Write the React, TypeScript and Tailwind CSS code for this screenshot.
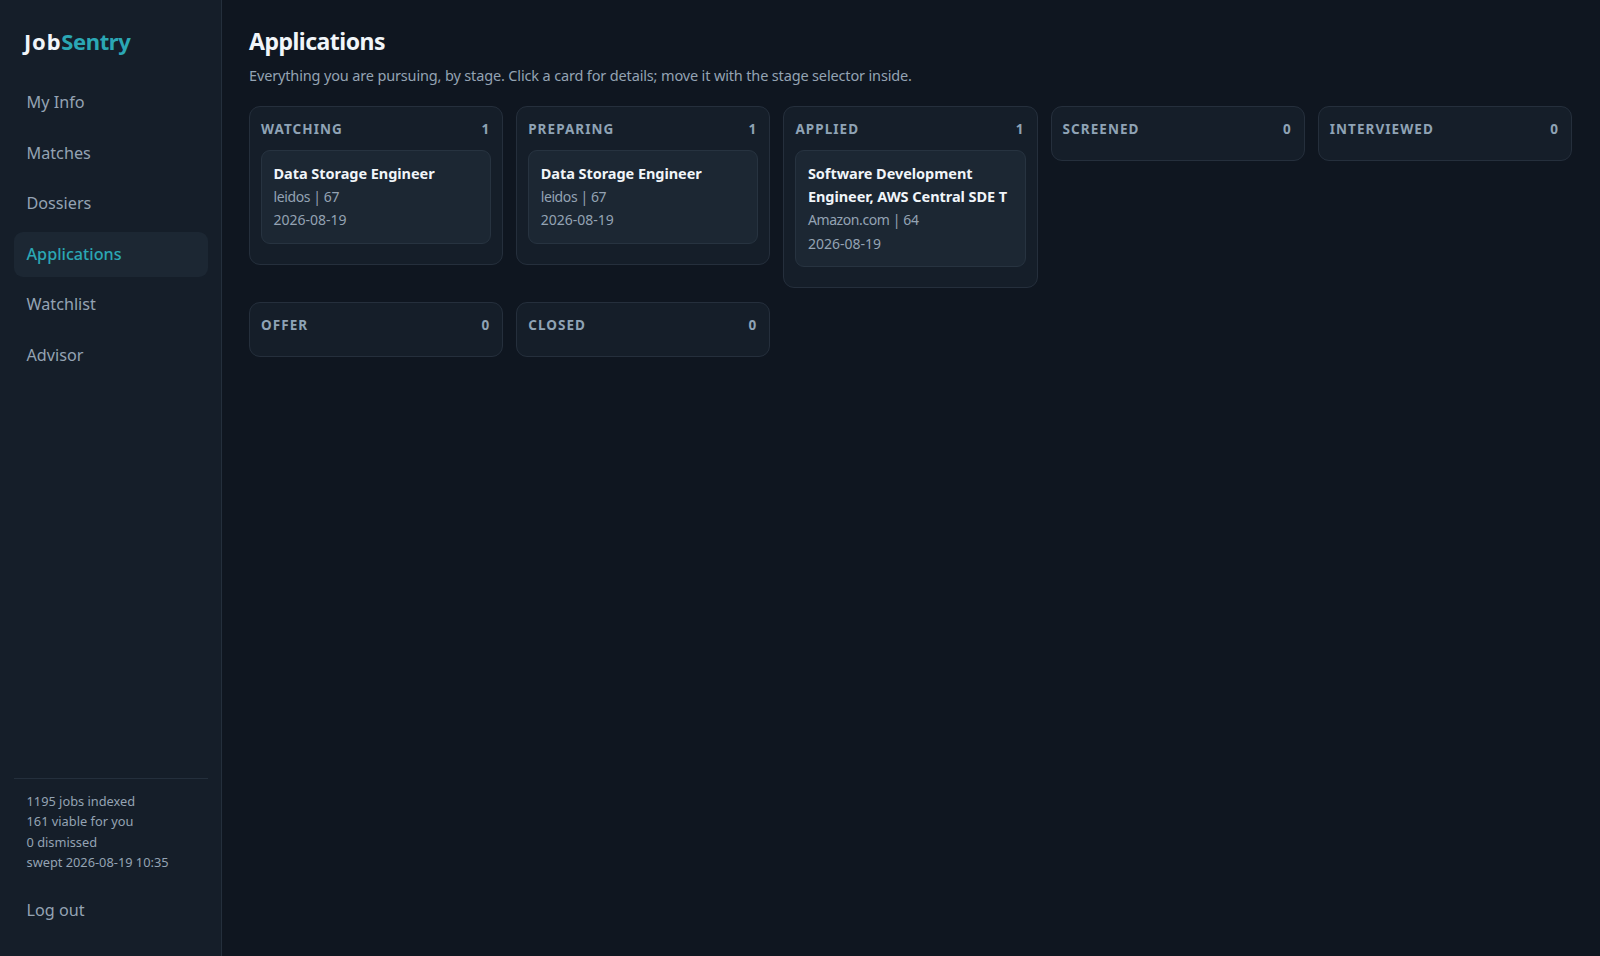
const NAV = ['My Info', 'Matches', 'Dossiers', 'Applications', 'Watchlist', 'Advisor'];

interface Job {
  title: string;
  meta: string;
  date: string;
}

interface Stage {
  name: string;
  jobs: Job[];
}

const STAGES: Stage[] = [
  { name: 'WATCHING', jobs: [{ title: 'Data Storage Engineer', meta: 'leidos | 67', date: '2026-08-19' }] },
  { name: 'PREPARING', jobs: [{ title: 'Data Storage Engineer', meta: 'leidos | 67', date: '2026-08-19' }] },
  { name: 'APPLIED', jobs: [{ title: 'Software Development Engineer, AWS Central SDE T', meta: 'Amazon.com | 64', date: '2026-08-19' }] },
  { name: 'SCREENED', jobs: [] },
  { name: 'INTERVIEWED', jobs: [] },
  { name: 'OFFER', jobs: [] },
  { name: 'CLOSED', jobs: [] },
];

function StageColumn({ stage }: { stage: Stage }) {
  return (
    <div className="rounded-[11px] border border-[#252f3c] bg-[#151e29] px-[11px] pt-[12px] pb-[20.5px]">
      <div className="flex h-[20px] items-center justify-between pr-[1px] text-[13.5px] font-bold tracking-[1.05px] text-[#8fa3b5]">
        <span>{stage.name}</span>
        <span>{stage.jobs.length}</span>
      </div>
      {stage.jobs.map((job) => (
        <div key={job.title} className="mt-[10.5px] rounded-[9px] border border-[#273340] bg-[#1c2733] px-[11.5px] pt-[11.5px] pb-[11px]">
          <div className="text-[14.5px] leading-[23.2px] font-bold tracking-[-0.05px] text-[#f1f5f9]">{job.title}</div>
          <div className="text-[14px] leading-[23.2px] tracking-[-0.4px] text-[#94a3b3]">{job.meta}</div>
          <div className="text-[14px] leading-[23.2px] text-[#94a3b3]">{job.date}</div>
        </div>
      ))}
    </div>
  );
}

export default function App() {
  return (
    <div className="flex h-screen bg-[#0f1620] font-['Noto_Sans',sans-serif]">
      <aside className="flex w-[222px] shrink-0 flex-col border-r border-[#242f3c] bg-[#151e29] pr-[13px] pl-[14px]">
        <div className="mt-[25px] pl-[10px] text-[22px] leading-[32px] font-bold tracking-[0.8px] text-[#f1f5f9]">
          Job<span className="tracking-[-0.4px] text-[#2ba7b4]">Sentry</span>
        </div>
        <nav className="mt-[23px] flex flex-col gap-[5.5px]">
          {NAV.map((item) => (
            <div
              key={item}
              className={`flex h-[45px] items-center rounded-[9px] px-[12.5px] text-[16.2px] ${
                item === 'Applications' ? 'bg-[#1c2733] font-medium text-[#2ba7b4]' : 'text-[#94a3b3]'
              }`}
            >
              {item}
            </div>
          ))}
        </nav>
        <div className="mt-auto border-t border-[#242f3c] pt-[12px] pl-[12.5px] text-[12.8px] leading-[20.6px] text-[#94a3b3]">
          <div>1195 jobs indexed</div>
          <div>161 viable for you</div>
          <div>0 dismissed</div>
          <div>swept 2026-08-19 10:35</div>
        </div>
        <div className="mt-[25px] mb-[34px] pl-[12.5px] text-[16.2px] leading-[24px] text-[#94a3b3]">Log out</div>
      </aside>
      <main className="flex-1 pt-[23.5px] pr-[28px] pl-[27px]">
        <h1 className="text-[23px] leading-[35px] font-bold tracking-[-0.5px] text-[#f1f5f9]">Applications</h1>
        <p className="mt-[5px] text-[14.5px] leading-[22px] tracking-[-0.15px] text-[#94a3b3]">
          Everything you are pursuing, by stage. Click a card for details; move it with the stage selector inside.
        </p>
        <div className="mt-[20.5px] grid grid-cols-5 items-start gap-x-[13px] gap-y-[14px]">
          {STAGES.map((stage) => (
            <StageColumn key={stage.name} stage={stage} />
          ))}
        </div>
      </main>
    </div>
  );
}
